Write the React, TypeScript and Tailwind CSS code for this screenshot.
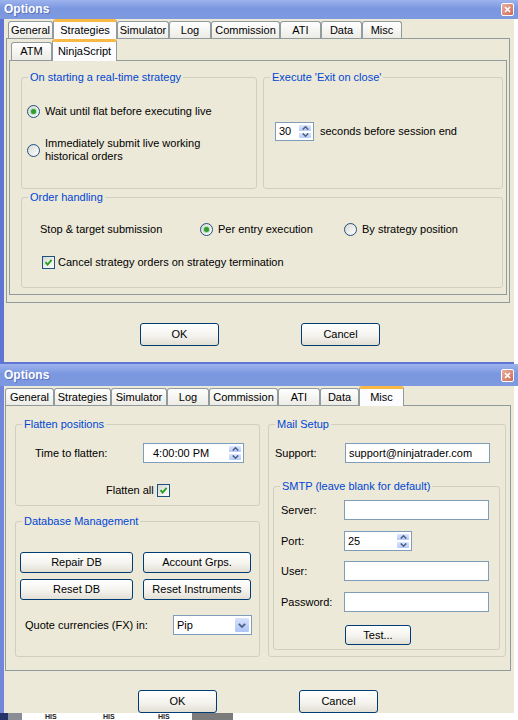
import React from "react";

type TabDef = { label: string; w: string };

const STRATEGY_TABS: TabDef[] = [
  { label: "General", w: "w-[45px]" },
  { label: "Strategies", w: "w-[64px]" },
  { label: "Simulator", w: "w-[52px]" },
  { label: "Log", w: "w-[42px]" },
  { label: "Commission", w: "w-[69px]" },
  { label: "ATI", w: "w-[41px]" },
  { label: "Data", w: "w-[41px]" },
  { label: "Misc", w: "w-[40px]" },
];

const MISC_TABS: TabDef[] = [
  { label: "General", w: "w-[49px]" },
  { label: "Strategies", w: "w-[57px]" },
  { label: "Simulator", w: "w-[56px]" },
  { label: "Log", w: "w-[42px]" },
  { label: "Commission", w: "w-[69px]" },
  { label: "ATI", w: "w-[42px]" },
  { label: "Data", w: "w-[39px]" },
  { label: "Misc", w: "w-[45px]" },
];

function Tab({ label, w, active, h }: TabDef & { active?: boolean; h?: string }) {
  if (active) {
    return (
      <div
        className={`${w} ${h ?? "h-[20px]"} -mb-px relative z-10 flex items-center justify-center rounded-t-[3px] border border-b-0 border-[#919b9c] border-t-[3px] border-t-[#f7b944] bg-[#fcfcfe]`}
      >
        {label}
      </div>
    );
  }
  return (
    <div
      className={`${w} ${h ?? "h-[17px]"} flex items-center justify-center rounded-t-[3px] border border-b-0 border-[#919b9c] bg-[linear-gradient(180deg,#ffffff,#ecebe5)]`}
    >
      {label}
    </div>
  );
}

function TitleBar({ h }: { h: string }) {
  return (
    <div
      className={`${h} w-[518px] shrink-0 flex items-center justify-between pl-[4px] pr-[4px] bg-[linear-gradient(180deg,#9db3ee,#7b97df_45%,#7d99e0)]`}
    >
      <span className="text-white font-bold text-[12px] [text-shadow:1px_1px_0_#5b72bd]">
        Options
      </span>
      <span className="w-[13px] h-[13px] rounded-[2px] border border-white bg-[linear-gradient(135deg,#eab0a0,#cf6a55)] flex items-center justify-center">
        <svg width="7" height="7" viewBox="0 0 7 7">
          <path d="M1 1 L6 6 M6 1 L1 6" stroke="#fff" strokeWidth="1.6" />
        </svg>
      </span>
    </div>
  );
}

function Group({
  title,
  className,
  children,
}: {
  title: string;
  className: string;
  children?: React.ReactNode;
}) {
  return (
    <fieldset className={`border border-[#d0d0bf] rounded-[3px] ${className}`}>
      <legend className="ml-[6px] px-[2px] text-[#0046d5]">{title}</legend>
      {children}
    </fieldset>
  );
}

function Radio({ checked }: { checked?: boolean }) {
  return (
    <span className="w-[13px] h-[13px] shrink-0 rounded-full border border-[#1c5180] bg-[linear-gradient(135deg,#d8d8d2,#ffffff)] flex items-center justify-center">
      {checked && (
        <span className="w-[5px] h-[5px] rounded-full bg-[#2f9e2f] shadow-[0_0_0_1px_#b9d8b9]" />
      )}
    </span>
  );
}

function Check({ checked }: { checked?: boolean }) {
  return (
    <span className="w-[13px] h-[13px] shrink-0 border border-[#1c5180] bg-[linear-gradient(135deg,#d8d8d2,#ffffff)] flex items-center justify-center">
      {checked && (
        <svg width="9" height="9" viewBox="0 0 9 9">
          <path d="M1.5 4.2 L3.6 6.6 L7.6 1.8" fill="none" stroke="#21a121" strokeWidth="1.8" />
        </svg>
      )}
    </span>
  );
}

function XpButton({ className, children }: { className: string; children: React.ReactNode }) {
  return (
    <button
      type="button"
      className={`flex items-center justify-center rounded-[3px] border border-[#003c74] bg-[linear-gradient(180deg,#ffffff_0%,#f4f3ee_55%,#e2dfd4_100%)] ${className}`}
    >
      {children}
    </button>
  );
}

function Chevron({ up }: { up?: boolean }) {
  return (
    <svg width="7" height="4" viewBox="0 0 7 4">
      <path
        d={up ? "M0.7 3.6 L3.5 0.8 L6.3 3.6" : "M0.7 0.4 L3.5 3.2 L6.3 0.4"}
        fill="none"
        stroke="#4d6185"
        strokeWidth="1.5"
      />
    </svg>
  );
}

function Spinner({ value, className, pad }: { value: string; className: string; pad?: string }) {
  return (
    <div className={`flex bg-white border border-[#7f9db9] ${className}`}>
      <span className={`flex-1 flex items-center ${pad ?? "pl-[3px]"}`}>{value}</span>
      <div className="w-[16px] p-[1px] flex flex-col">
        <span className="flex-1 rounded-t-[2px] border border-white bg-[linear-gradient(180deg,#dbe5fd,#b7cbf8)] flex items-center justify-center">
          <Chevron up />
        </span>
        <span className="flex-1 rounded-b-[2px] border border-white bg-[linear-gradient(180deg,#dbe5fd,#b7cbf8)] flex items-center justify-center">
          <Chevron />
        </span>
      </div>
    </div>
  );
}

function TextBox({ value, className }: { value?: string; className: string }) {
  return (
    <div className={`flex items-center pl-[3px] bg-white border border-[#7f9db9] ${className}`}>
      {value}
    </div>
  );
}

function Select({ value, className }: { value: string; className: string }) {
  return (
    <div className={`flex bg-white border border-[#7f9db9] ${className}`}>
      <span className="flex-1 flex items-center pl-[3px]">{value}</span>
      <span className="w-[16px] m-[1px] rounded-[2px] border border-white bg-[linear-gradient(180deg,#d6e1fd,#adc4f7)] flex items-center justify-center">
        <svg width="8" height="5" viewBox="0 0 8 5">
          <path d="M0.8 0.8 L4 4 L7.2 0.8" fill="none" stroke="#4d6185" strokeWidth="1.8" />
        </svg>
      </span>
    </div>
  );
}

function StrategiesDialog() {
  return (
    <section className="h-[364px] shrink-0 flex flex-col">
      <TitleBar h="h-[19px]" />
      <div className="w-[514px] flex-1 flex flex-col bg-[#ece9d8] border-l-4 border-b-2 border-[#5f74d3]">
        <div className="h-[19px] pl-[4px] flex items-end">
          {STRATEGY_TABS.map((t) => (
            <Tab key={t.label} {...t} active={t.label === "Strategies"} />
          ))}
        </div>
        <div className="ml-[2px] w-[504px] h-[265px] border border-[#919b9c] flex flex-col">
          <div className="h-[21px] pl-[4px] flex items-end">
            <Tab label="ATM" w="w-[41px]" h="h-[18px]" />
            <Tab label="NinjaScript" w="w-[65px]" h="h-[22px]" active />
          </div>
          <div className="ml-[2px] w-[498px] h-[235px] border border-[#919b9c] pt-[10px] pl-[11px]">
            <div className="flex gap-[6px]">
              <Group title="On starting a real-time strategy" className="w-[236px] h-[118px]">
                <div className="pl-[5px] pt-[21px]">
                  <label className="h-[13px] flex items-center gap-[5px]">
                    <Radio checked />
                    <span>Wait until flat before executing live</span>
                  </label>
                  <label className="mt-[19px] flex items-center gap-[5px]">
                    <Radio />
                    <span>
                      Immediately submit live working
                      <br />
                      historical orders
                    </span>
                  </label>
                </div>
              </Group>
              <Group title="Execute 'Exit on close'" className="w-[240px] h-[118px]">
                <div className="pl-[11px] pt-[38px] flex items-center gap-[6px]">
                  <Spinner value="30" className="w-[39px] h-[19px]" />
                  <span>seconds before session end</span>
                </div>
              </Group>
            </div>
            <Group title="Order handling" className="mt-[2px] w-[482px] h-[97px]">
              <div className="pl-[18px] pt-[19px]">
                <div className="h-[13px] flex items-center">
                  <span className="w-[160px]">Stop &amp; target submission</span>
                  <label className="w-[144px] flex items-center gap-[5px]">
                    <Radio checked />
                    <span>Per entry execution</span>
                  </label>
                  <label className="flex items-center gap-[5px]">
                    <Radio />
                    <span>By strategy position</span>
                  </label>
                </div>
                <label className="mt-[20px] ml-[2px] flex items-center gap-[3px]">
                  <Check checked />
                  <span>Cancel strategy orders on strategy termination</span>
                </label>
              </div>
            </Group>
          </div>
        </div>
        <div className="mt-[20px] pl-[136px] flex gap-[82px]">
          <XpButton className="w-[79px] h-[23px]">OK</XpButton>
          <XpButton className="w-[79px] h-[23px]">Cancel</XpButton>
        </div>
      </div>
    </section>
  );
}

function SmtpRow({ label, mt, children }: { label: string; mt: string; children: React.ReactNode }) {
  return (
    <div className={`${mt} flex items-center`}>
      <span className="pl-[7px] w-[70px]">{label}</span>
      {children}
    </div>
  );
}

function MiscDialog() {
  return (
    <section className="h-[349px] shrink-0 flex flex-col">
      <TitleBar h="h-[22px]" />
      <div className="w-[514px] flex-1 flex flex-col bg-[#ece9d8] border-l-4 border-[#7387da]">
        <div className="h-[19px] pl-[1px] flex items-end">
          {MISC_TABS.map((t) => (
            <Tab key={t.label} {...t} active={t.label === "Misc"} />
          ))}
        </div>
        <div className="ml-[1px] w-[506px] h-[266px] border border-[#919b9c] pt-[12px] pl-[9px] flex gap-[8px]">
          <div className="flex flex-col">
            <Group title="Flatten positions" className="w-[245px] h-[88px]">
              <div className="mt-[12px] flex items-center">
                <span className="pl-[19px] w-[127px]">Time to flatten:</span>
                <Spinner value="4:00:00 PM" className="w-[101px] h-[20px]" pad="pl-[9px]" />
              </div>
              <label className="mt-[21px] pl-[90px] flex items-center gap-[3px]">
                <span>Flatten all</span>
                <Check checked />
              </label>
            </Group>
            <Group title="Database Management" className="mt-[9px] w-[245px] h-[142px]">
              <div className="mt-[24px] pl-[4px] grid grid-cols-[113px_108px] gap-x-[10px] gap-y-[6px]">
                <XpButton className="h-[21px]">Repair DB</XpButton>
                <XpButton className="h-[21px]">Account Grps.</XpButton>
                <XpButton className="h-[21px]">Reset DB</XpButton>
                <XpButton className="h-[21px]">Reset Instruments</XpButton>
              </div>
              <div className="mt-[15px] flex items-center">
                <span className="pl-[9px] w-[157px]">Quote currencies (FX) in:</span>
                <Select value="Pip" className="w-[79px] h-[20px]" />
              </div>
            </Group>
          </div>
          <Group title="Mail Setup" className="w-[238px] h-[239px]">
            <div className="mt-[12px] flex items-center">
              <span className="pl-[6px] w-[76px]">Support:</span>
              <TextBox value="support@ninjatrader.com" className="w-[145px] h-[20px]" />
            </div>
            <Group title="SMTP (leave blank for default)" className="mt-[17px] ml-[4px] w-[227px] h-[170px]">
              <SmtpRow label="Server:" mt="mt-[7px]">
                <TextBox className="w-[145px] h-[20px]" />
              </SmtpRow>
              <SmtpRow label="Port:" mt="mt-[11px]">
                <Spinner value="25" className="w-[68px] h-[20px]" />
              </SmtpRow>
              <SmtpRow label="User:" mt="mt-[10px]">
                <TextBox className="w-[145px] h-[20px]" />
              </SmtpRow>
              <SmtpRow label="Password:" mt="mt-[11px]">
                <TextBox className="w-[145px] h-[20px]" />
              </SmtpRow>
              <XpButton className="mt-[13px] ml-[71px] w-[66px] h-[20px]">Test...</XpButton>
            </Group>
          </Group>
        </div>
        <div className="mt-[19px] pl-[134px] flex gap-[82px]">
          <XpButton className="w-[79px] h-[23px]">OK</XpButton>
          <XpButton className="w-[79px] h-[23px]">Cancel</XpButton>
        </div>
      </div>
    </section>
  );
}

// strip of the window lying underneath, along the bottom edge
function UnderlyingWindow() {
  return (
    <div className="h-[7px] shrink-0 flex items-start overflow-hidden bg-white text-[#222] text-[7px] leading-[7px] font-bold">
      <span className="w-[8px] h-full bg-[#26336a]" />
      <span className="w-[14px] h-full bg-[#8b8d96]" />
      <span className="ml-[23px] w-[58px]">HIS</span>
      <span className="w-[55px]">HIS</span>
      <span className="w-[34px]">HIS</span>
      <span className="w-[41px] h-full bg-[#7b7b7b]" />
    </div>
  );
}

export default function App() {
  return (
    <div className="w-[518px] h-[720px] overflow-hidden bg-white text-black text-[11px] leading-[13px] font-['Liberation_Sans',Arial,sans-serif] flex flex-col">
      <StrategiesDialog />
      <MiscDialog />
      <UnderlyingWindow />
    </div>
  );
}
